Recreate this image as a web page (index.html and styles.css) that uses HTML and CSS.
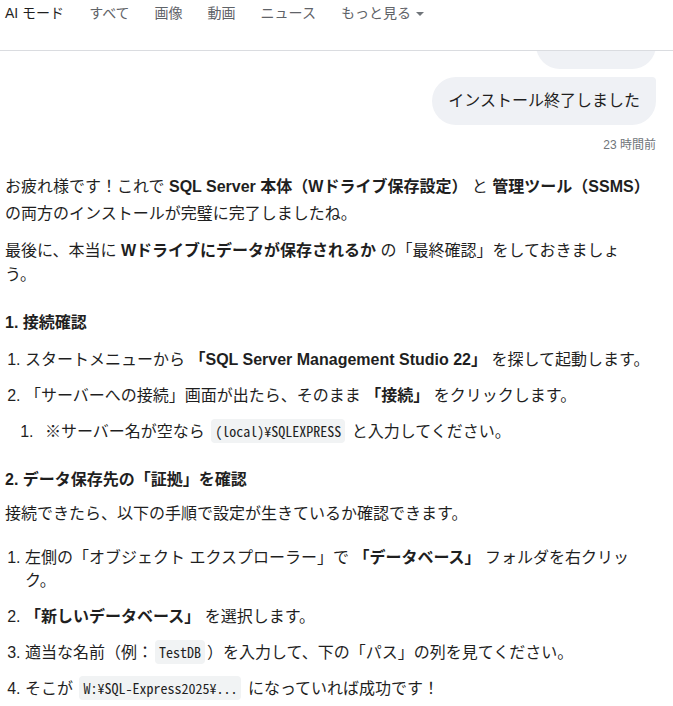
FILE: index.html
```html
<!DOCTYPE html>
<html lang="ja">

<head>
    <meta charset="UTF-8">
    <meta name="viewport" content="width=device-width, initial-scale=1.0">
    <title>AI モード</title>
    <link rel="stylesheet" href="styles.css">
</head>

<body>

    <!-- Tabs -->
    <nav class="tabs">
        <span class="tab active">AI モード</span>
        <span class="tab">すべて</span>
        <span class="tab">画像</span>
        <span class="tab">動画</span>
        <span class="tab">ニュース</span>
        <span class="tab more">もっと見る<span class="caret"></span></span>
    </nav>

    <div class="chat">
        <!-- User messages -->
        <div class="bubble bubble-cut"></div>
        <div class="bubble">インストール終了しました</div>
        <div class="time">23 時間前</div>

        <!-- Answer -->
        <div class="answer">
            <p class="first">お疲れ様です！これで <strong>SQL Server 本体（Wドライブ保存設定）</strong> と <strong>管理ツール（SSMS）</strong> の両方のインストールが完璧に完了しましたね。</p>
            <p class="check">最後に、本当に <strong>Wドライブにデータが保存されるか</strong> の「最終確認」をしておきましょう。</p>

            <h3>1. 接続確認</h3>
            <ol>
                <li>スタートメニューから <strong>「SQL Server Management Studio 22」</strong> を探して起動します。</li>
                <li>「サーバーへの接続」画面が出たら、そのまま <strong>「接続」</strong> をクリックします。
                    <ol>
                        <li>※サーバー名が空なら <code>(local)¥SQLEXPRESS</code> と入力してください。</li>
                    </ol>
                </li>
            </ol>

            <h3>2. データ保存先の「証拠」を確認</h3>
            <p class="lead">接続できたら、以下の手順で設定が生きているか確認できます。</p>
            <ol>
                <li>左側の「オブジェクト エクスプローラー」で <strong>「データベース」</strong> フォルダを右クリック。</li>
                <li><strong>「新しいデータベース」</strong> を選択します。</li>
                <li>適当な名前（例：<code>TestDB</code>）を入力して、下の「パス」の列を見てください。</li>
                <li>そこが <code>W:¥SQL-Express2025¥...</code> になっていれば成功です！</li>
            </ol>
        </div>
    </div>

</body>

</html>
```

FILE: styles.css
```css
body {
    font-family: 'Liberation Sans', 'Noto Sans CJK JP', sans-serif;
    margin: 0;
    color: #1f1f1f;
    background: #fff;
    height: 706px;
    overflow: hidden;
}

.tabs {
    display: flex;
    align-items: flex-start;
    gap: 25px;
    height: 51px;
    padding: 4px 0 0 5px;
    box-sizing: border-box;
    border-bottom: 1px solid #dadce0;
    font-size: 14px;
    line-height: 18px;
}

.tab {
    color: #5f6368;
}

.tab.active {
    color: #1f1f1f;
}

.more {
    display: flex;
    align-items: center;
    gap: 5px;
}

.caret {
    width: 0;
    height: 0;
    border-left: 4px solid transparent;
    border-right: 4px solid transparent;
    border-top: 4px solid #70757a;
    margin-top: 1px;
}

.chat {
    padding: 0 17px 0 5px;
    overflow: hidden;
}

.bubble {
    margin-left: auto;
    width: max-content;
    background: #eff1f5;
    border-radius: 24px 4px 24px 24px;
    padding: 12px 16px;
    font-size: 16px;
    line-height: 24px;
    margin-top: 8px;
}

.bubble-cut {
    width: 120px;
    height: 48px;
    padding: 0;
    margin-top: -30px;
    border-radius: 24px;
}

.time {
    text-align: right;
    font-size: 12px;
    line-height: 16px;
    color: #70757a;
    margin-top: 12px;
}

.answer {
    font-size: 16px;
    line-height: 24px;
}

.answer p {
    margin: 12px 0 0;
}

.answer p.first {
    margin-top: 20px;
    line-height: 27px;
}

.answer p.check {
    max-width: 636px;
}

.answer h3 {
    font-size: 16px;
    line-height: 24px;
    margin: 24px 0 0;
}

.answer ol + h3 {
    margin-top: 25px;
}

.answer p.lead {
    margin-top: 10px;
}

ol {
    margin: 13px 0 0;
    padding-left: 20px;
}

.lead + ol {
    margin-top: 20px;
}

li {
    margin-top: 13px;
    line-height: 23px;
}

li:first-child {
    margin-top: 0;
}

li ol {
    margin-top: 13px;
    padding-left: 13px;
}

li ol li {
    padding-left: 7px;
}

code {
    font-family: 'Noto Sans Mono CJK JP', 'DejaVu Sans Mono', monospace;
    font-size: 14px;
    background: #f1f3f4;
    border-radius: 4px;
    padding: 2px 4px;
    margin: 0 2px;
}
```
